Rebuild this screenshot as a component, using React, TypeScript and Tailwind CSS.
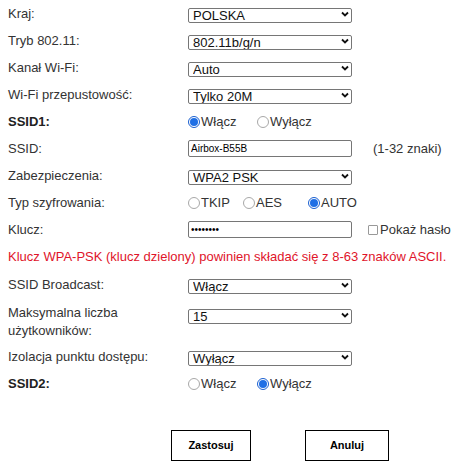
import React from "react";

const Chevron = () => (
  <svg className="absolute right-[3px] top-1/2 -translate-y-1/2 pointer-events-none" width="8" height="6" viewBox="0 0 8 6">
    <polyline points="1,1.5 4,4.5 7,1.5" fill="none" stroke="#111" strokeWidth="1.8" />
  </svg>
);

const Select = ({ value }: { value: string }) => (
  <div className="relative w-[164px] h-[15px]">
    <select
      defaultValue={value}
      className="appearance-none w-full h-full border border-[#767676] rounded-[2px] bg-white pl-[4px] pr-4 py-0 text-[13px] leading-[13px] font-normal text-[#111] outline-none font-['Liberation_Sans',Arial,sans-serif]"
    >
      <option>{value}</option>
    </select>
    <Chevron />
  </div>
);

const Radio = ({ checked, label, w }: { checked?: boolean; label: string; w: string }) => (
  <label className={`flex items-center ${w}`}>
    {checked ? (
      <span className="w-[12px] h-[12px] rounded-full border border-[#1a5fd0] bg-white flex items-center justify-center">
        <span className="w-[8px] h-[8px] rounded-full bg-[#1f6fe5]" />
      </span>
    ) : (
      <span className="w-[12px] h-[12px] rounded-full border border-[#a8a8a8] bg-white" />
    )}
    <span className="ml-[1px] text-[#333]">{label}</span>
  </label>
);

const Row = ({ label, bold, children, h = "h-[27px]" }: { label: React.ReactNode; bold?: boolean; children?: React.ReactNode; h?: string }) => (
  <div className={`flex items-center ${h}`}>
    <div className={`w-[180px] shrink-0 ${bold ? "font-bold text-[#222]" : ""}`}>{label}</div>
    <div className="flex items-center">{children}</div>
  </div>
);

const TextInput = ({ value, type = "text" }: { value: string; type?: string }) => (
  <input
    type={type}
    defaultValue={value}
    className="w-[164px] h-[17px] border border-[#767676] rounded-[2px] px-[2px] text-[10px] font-normal text-black outline-none font-['Liberation_Sans',Arial,sans-serif]"
  />
);

export default function App() {
  return (
    <div className="w-[452px] h-[464px] bg-white pl-2 text-[13px] text-[#333] font-['Liberation_Sans',Arial,sans-serif] overflow-hidden">
      <Row label="Kraj:"><Select value="POLSKA" /></Row>
      <Row label="Tryb 802.11:"><Select value="802.11b/g/n" /></Row>
      <Row label="Kanał Wi-Fi:"><Select value="Auto" /></Row>
      <Row label="Wi-Fi przepustowość:"><Select value="Tylko 20M" /></Row>
      <Row label="SSID1:" bold>
        <Radio checked label="Włącz" w="w-[69px]" />
        <Radio label="Wyłącz" w="" />
      </Row>
      <Row label="SSID:">
        <TextInput value="Airbox-B55B" />
        <span className="ml-[21px]">(1-32 znaki)</span>
      </Row>
      <Row label="Zabezpieczenia:"><Select value="WPA2 PSK" /></Row>
      <Row label="Typ szyfrowania:">
        <Radio label="TKIP" w="w-[55px]" />
        <Radio label="AES" w="w-[65px]" />
        <Radio checked label="AUTO" w="" />
      </Row>
      <Row label="Klucz:">
        <TextInput value="12345678" type="password" />
        <span className="ml-[16px] flex items-center">
          <span className="w-[10px] h-[10px] border border-[#999] bg-white rounded-[1px]" />
          <span className="ml-[2px]">Pokaż hasło</span>
        </span>
      </Row>
      <div className="h-[28px] flex items-center text-[#e0142a]">
        Klucz WPA-PSK (klucz dzielony) powinien składać się z 8-63 znaków ASCII.
      </div>
      <Row label="SSID Broadcast:"><Select value="Włącz" /></Row>
      <div className="flex h-[45px]">
        <div className="w-[180px] shrink-0 pt-[6px] leading-[18px]">
          Maksymalna liczba
          <br />
          użytkowników:
        </div>
        <div className="pt-[9px]"><Select value="15" /></div>
      </div>
      <Row label="Izolacja punktu dostępu:"><Select value="Wyłącz" /></Row>
      <Row label="SSID2:" bold>
        <Radio label="Włącz" w="w-[69px]" />
        <Radio checked label="Wyłącz" w="" />
      </Row>
      <div className="flex ml-[163px] mt-[33px] gap-[54px]">
        <button className="w-[80px] h-[31px] border border-black bg-white text-[11px] font-bold text-black">Zastosuj</button>
        <button className="w-[84px] h-[31px] border border-black bg-white text-[11px] font-bold text-black">Anuluj</button>
      </div>
    </div>
  );
}
